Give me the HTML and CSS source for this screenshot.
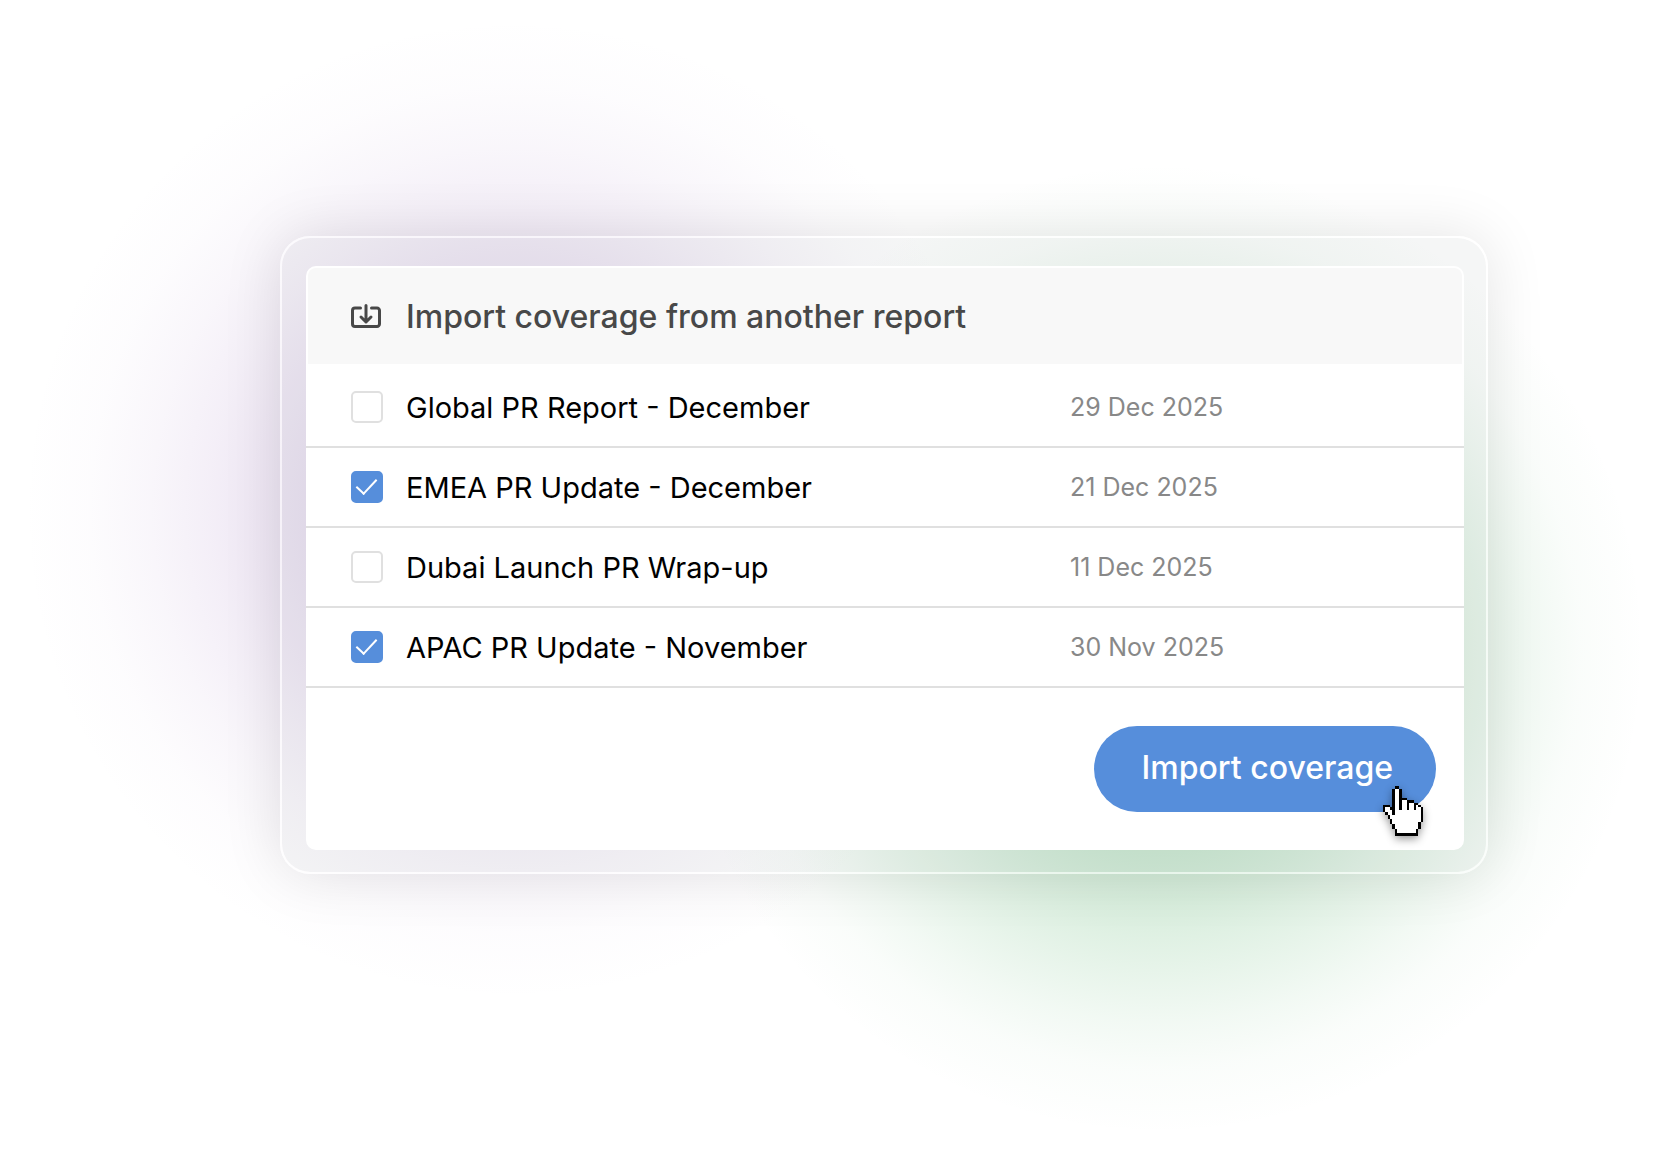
FILE: index.html
```
<!DOCTYPE html>
<html lang="en">

<head>
    <meta charset="UTF-8">
    <title>Import coverage</title>
    <link rel="stylesheet" href="styles.css">
</head>

<body>
    <main class="page">
        <div class="frame">
            <form class="card">
                <header class="card-header">
                    <svg class="import-icon" viewBox="0 0 32 32" aria-hidden="true">
                        <path d="M9.5 8H4a2.5 2.5 0 0 0-2.500 2.500V24A2.500 2.500 0 0 0 4 26.500h22a2.500 2.500 0 0 0 2.500-2.500V10.500A2.500 2.500 0 0 0 26 8h-5.500" />
                        <path d="M15 5.500V22M10 17l5 5 5-5" />
                    </svg>
                    <h1>Import coverage from another report</h1>
                </header>
                <ul class="reports">
                    <li>
                        <input type="checkbox" id="global">
                        <label for="global">Global PR Report - December</label>
                        <time datetime="2025-12-29">29 Dec 2025</time>
                    </li>
                    <li>
                        <input type="checkbox" id="emea" checked>
                        <label for="emea">EMEA PR Update - December</label>
                        <time datetime="2025-12-21">21 Dec 2025</time>
                    </li>
                    <li>
                        <input type="checkbox" id="dubai">
                        <label for="dubai">Dubai Launch PR Wrap-up</label>
                        <time datetime="2025-12-11">11 Dec 2025</time>
                    </li>
                    <li>
                        <input type="checkbox" id="apac" checked>
                        <label for="apac">APAC PR Update - November</label>
                        <time datetime="2025-11-30">30 Nov 2025</time>
                    </li>
                </ul>
                <footer class="card-footer">
                    <button type="button" class="import-btn">
                        Import coverage
                        <svg class="cursor" viewBox="0 0 17 21" aria-hidden="true">
                            <path stroke="#000" d="M5 .5h2M4 1.500h4M4 2.500h4M4 3.500h4M4 4.500h4M4 5.500h6M4 6.500h9M4 7.500h11M0 8.500h3M4 8.500h12M0 9.500h17M0 10.500h17M1 11.500h16M2 12.500h15M2 13.500h15M3 14.500h14M3 15.500h13M4 16.500h12M4 17.500h12M5 18.500h10M5 19.500h10M5 20.500h10" />
                            <path stroke="#fff" d="M5 1.500h2M5 2.500h2M5 3.500h2M5 4.500h2M5 5.500h2M5 6.500h2m1 0h2M5 7.500h2m1 0h2m1 0h2M5 8.500h2m1 0h2m1 0h2m1 0h1M1 9.500h2m2 0h2m1 0h2m1 0h2m1 0h2M1 10.500h3m1 0h11M2 11.500h2m1 0h11M3 12.500h13M3 13.500h13M4 14.500h12M4 15.500h11M5 16.500h10M5 17.500h10M6 18.500h8M6 19.500h8" />
                        </svg>
                    </button>
                </footer>
            </form>
        </div>
    </main>
</body>

</html>
```
FILE: styles.css
```
* {
    margin: 0;
    padding: 0;
    box-sizing: border-box;
}

body {
    background-color: #fff;
    font-family: "Inter", "Liberation Sans", sans-serif;
}

/* purple glow on the left, green glow on the right */
.page {
    min-height: 100vh;
    padding: 236px 168px 40px 280px;
    background-image:
        radial-gradient(circle at 31% 44%,
            rgba(156, 111, 188, 0.22) 200px,
            rgba(156, 111, 188, 0.17) 250px,
            rgba(156, 111, 188, 0.11) 307px,
            rgba(156, 111, 188, 0.06) 365px,
            rgba(156, 111, 188, 0.02) 425px,
            rgba(156, 111, 188, 0) 490px),
        radial-gradient(circle at 70% 56%,
            rgba(90, 180, 110, 0.31) 200px,
            rgba(90, 180, 110, 0.25) 245px,
            rgba(90, 180, 110, 0.19) 290px,
            rgba(90, 180, 110, 0.13) 335px,
            rgba(90, 180, 110, 0.08) 375px,
            rgba(90, 180, 110, 0.03) 420px,
            rgba(90, 180, 110, 0) 485px);
}

.frame {
    padding: 28px 22px 22px 24px;
    border: 2px solid rgba(255, 255, 255, 0.5);
    border-radius: 30px;
    background-color: rgba(0, 20, 25, 0.04);
    background-clip: padding-box;
    box-shadow: 0 0 60px rgba(0, 0, 0, 0.11);
}

.card {
    padding-top: 2px;
    border-radius: 10px;
    background-color: #fff;
}

.card-header {
    display: flex;
    align-items: center;
    gap: 23px;
    height: 96px;
    margin: 0 2px;
    padding: 0 43px;
    border-radius: 8px 8px 0 0;
    background-color: #f8f8f8;
    color: #484848;
}

.card-header h1 {
    font-size: 32px;
    font-weight: 500;
}

.import-icon {
    width: 32px;
    height: 32px;
    fill: none;
    stroke: currentColor;
    stroke-width: 3;
    stroke-linecap: round;
    stroke-linejoin: round;
}

.reports {
    padding-top: 4px;
    list-style: none;
}

.reports li {
    display: grid;
    grid-template-columns: 32px 1fr 342px;
    align-items: center;
    column-gap: 23px;
    height: 80px;
    padding: 0 52px 0 45px;
    border-bottom: 2px solid #e0e0e0;
}

.reports label {
    font-size: 29px;
    color: #000;
}

.reports time {
    font-size: 25px;
    color: #888;
}

.reports input {
    appearance: none;
    display: grid;
    place-items: center;
    width: 32px;
    height: 32px;
    border: 2px solid #e0e0e0;
    border-radius: 5px;
    background-color: #fff;
}

.reports input:checked {
    border-color: #568edb;
    background-color: #568edb;
}

.reports input:checked::before {
    content: "";
    width: 9px;
    height: 18px;
    margin: 0 2px 6px 0;
    border-right: 2px solid #fff;
    border-bottom: 2px solid #fff;
    transform: rotate(43deg);
}

.card-footer {
    display: flex;
    justify-content: flex-end;
    padding: 38px 28px;
}

.import-btn {
    position: relative;
    height: 86px;
    padding: 0 43px 4px 48px;
    border: none;
    border-radius: 43px;
    background-color: #568edb;
    color: #fff;
    font-family: inherit;
    font-size: 32px;
    font-weight: 500;
    cursor: pointer;
}

.cursor {
    position: absolute;
    right: 13px;
    bottom: -24px;
    width: 40px;
    height: 50px;
    shape-rendering: crispEdges;
    filter: drop-shadow(0 3px 4px rgba(0, 0, 0, 0.4));
}
```
